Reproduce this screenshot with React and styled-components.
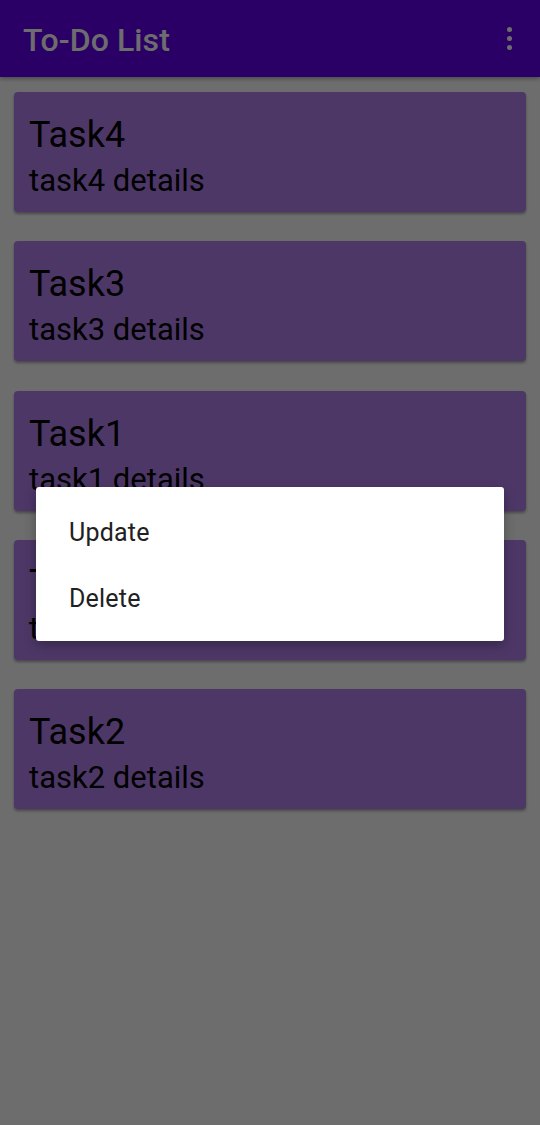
import React from "react";
import styled, { createGlobalStyle } from "styled-components";

const GlobalStyle = createGlobalStyle`
  html, body {
    margin: 0;
    padding: 0;
    background: #ffffff;
    font-family: Roboto, "Noto Sans", sans-serif;
  }
`;

const Screen = styled.div`
  position: relative;
  width: 540px;
  height: 1125px;
  overflow: hidden;
  background: #ffffff;
`;

const Toolbar = styled.header`
  height: 77px;
  background: #6200ee;
  display: flex;
  align-items: center;
  justify-content: space-between;
  padding: 2px 28px 0 23px;
  box-sizing: border-box;
  box-shadow: 0 2px 4px rgba(0, 0, 0, 0.3);
`;

const Title = styled.h1`
  margin: 0;
  color: #ffffff;
  font-size: 32px;
  font-weight: 500;
  letter-spacing: 0.1px;
`;

const MoreButton = styled.div`
  display: flex;
  flex-direction: column;
  gap: 4px;
  margin-top: -2px;

  span {
    width: 5px;
    height: 5px;
    border-radius: 50%;
    background: #ffffff;
  }
`;

const List = styled.main`
  display: flex;
  flex-direction: column;
  gap: 29.3px;
  padding: 15px 14px;
`;

const Card = styled.div`
  height: 120px;
  background: #b580f2;
  border-radius: 4px;
  box-shadow: 0 2px 3px rgba(0, 0, 0, 0.35);
  padding: 22px 15px 0;
  box-sizing: border-box;
  color: #000000;
`;

const CardTitle = styled.div`
  font-size: 36px;
  line-height: 42px;
`;

const CardDetails = styled.div`
  font-size: 31px;
  line-height: 36px;
  margin-top: 7px;
`;

const Scrim = styled.div`
  position: absolute;
  inset: 0;
  background: rgba(0, 0, 0, 0.572);
`;

const Menu = styled.div`
  position: absolute;
  left: 36px;
  top: 487px;
  width: 468px;
  padding: 11px 0;
  box-sizing: border-box;
  background: #ffffff;
  border-radius: 3px;
  box-shadow: 0 4px 12px rgba(0, 0, 0, 0.3);
`;

const MenuItem = styled.div`
  height: 66px;
  display: flex;
  align-items: center;
  padding-left: 33px;
  padding-top: 2px;
  box-sizing: border-box;
  font-size: 25px;
  color: #212121;
  letter-spacing: 0.2px;
`;

const tasks = [
  { title: "Task4", details: "task4 details" },
  { title: "Task3", details: "task3 details" },
  { title: "Task1", details: "task1 details" },
  { title: "Task5", details: "task5 details" },
  { title: "Task2", details: "task2 details" },
];

const App = () => {
  return (
    <Screen>
      <GlobalStyle />
      <Toolbar>
        <Title>To-Do List</Title>
        <MoreButton>
          <span />
          <span />
          <span />
        </MoreButton>
      </Toolbar>
      <List>
        {tasks.map((t) => (
          <Card key={t.title}>
            <CardTitle>{t.title}</CardTitle>
            <CardDetails>{t.details}</CardDetails>
          </Card>
        ))}
      </List>
      <Scrim />
      <Menu>
        <MenuItem>Update</MenuItem>
        <MenuItem>Delete</MenuItem>
      </Menu>
    </Screen>
  );
};

export default App;
